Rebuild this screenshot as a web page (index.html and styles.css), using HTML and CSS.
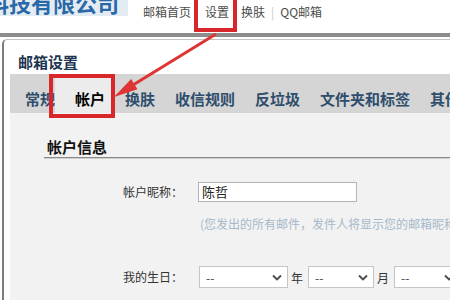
FILE: index.html
```html
<!DOCTYPE html>
<html lang="zh-CN">
<head>
<meta charset="utf-8">
<title>邮箱设置</title>
<link rel="stylesheet" href="styles.css">
</head>
<body>
<header class="top">
  <div class="logo"><span class="logo-text">科技有限公司</span></div>
  <nav class="nav">
    <a class="nav-link first">邮箱首页</a>
    <a class="nav-link second">设置</a>
    <a class="nav-link">换肤</a>
    <span class="sep">|</span>
    <a class="nav-link">QQ邮箱</a>
  </nav>
</header>
<div class="bar"></div>
<main class="panel">
  <div class="panel-title">邮箱设置</div>
  <div class="tabs">
    <span class="tab">常规</span>
    <span class="tab active">帐户</span>
    <span class="tab">换肤</span>
    <span class="tab">收信规则</span>
    <span class="tab">反垃圾</span>
    <span class="tab">文件夹和标签</span>
    <span class="tab">其他</span>
  </div>
  <div class="content">
    <div class="section-title">帐户信息</div>
    <div class="row">
      <span class="label">帐户昵称：</span>
      <div class="input">陈哲</div>
    </div>
    <div class="hint">(您发出的所有邮件，发件人将显示您的邮箱昵称</div>
    <div class="row birthday">
      <span class="label">我的生日：</span>
      <div class="select w1"><span class="val">--</span><svg class="chev" width="10" height="7" viewBox="0 0 10 7"><path d="M1 1.5 L5 5.5 L9 1.5" fill="none" stroke="#4a4a4a" stroke-width="1.8"/></svg></div>
      <span class="unit">年</span>
      <div class="select w2"><span class="val">--</span><svg class="chev" width="10" height="7" viewBox="0 0 10 7"><path d="M1 1.5 L5 5.5 L9 1.5" fill="none" stroke="#4a4a4a" stroke-width="1.8"/></svg></div>
      <span class="unit">月</span>
      <div class="select w2"><span class="val">--</span><svg class="chev" width="10" height="7" viewBox="0 0 10 7"><path d="M1 1.5 L5 5.5 L9 1.5" fill="none" stroke="#4a4a4a" stroke-width="1.8"/></svg></div>
    </div>
  </div>
</main>
<svg class="overlay" width="450" height="300" viewBox="0 0 450 300">
  <rect x="196" y="-2" width="39" height="32" fill="none" stroke="#d8262a" stroke-width="4"/>
  <rect x="51" y="76" width="62" height="40" fill="none" stroke="#d8262a" stroke-width="4"/>
  <line x1="216" y1="34" x2="133" y2="85" stroke="#df3434" stroke-width="3"/>
  <polygon points="114,97 137.5,89.3 131.1,79.1" fill="#df3434"/>
</svg>
</body>
</html>
```

FILE: styles.css
```css
* { box-sizing: border-box; }
html, body { margin: 0; padding: 0; }
body {
  width: 450px;
  height: 300px;
  overflow: hidden;
  position: relative;
  background: #fff;
  font-family: "Noto Sans CJK SC", "Noto Sans", sans-serif;
  color: #333;
}
.top {
  height: 33px;
  display: flex;
  align-items: flex-start;
}
.logo {
  width: 128px;
  height: 16px;
  background: #e4ecf3;
  overflow: hidden;
  flex-shrink: 0;
}
.logo-text {
  display: block;
  margin-top: -11px;
  margin-left: -13px;
  font-size: 22px;
  line-height: 26px;
  font-weight: bold;
  color: #2a69a8;
  white-space: nowrap;
}
.nav {
  display: flex;
  gap: 6px;
  margin-left: 15px;
  padding-top: 4px;
  font-size: 12px;
  line-height: 16px;
}
.nav-link { color: #4b4b4b; }
.nav-link.first { margin-right: 8px; }
.nav-link.second { margin-right: 6px; }
.sep { color: #c8c8c8; }
.bar {
  height: 4px;
  background: #8d8d8d;
}
.panel {
  margin: 2px 0 0 2px;
  border-top: 1px solid #c4c4c4;
  border-left: 2px solid #7c7c7c;
  border-top-left-radius: 5px;
  height: 300px;
}
.panel-title {
  padding: 12px 0 2px 14px;
  font-size: 15px;
  line-height: 20px;
  font-weight: bold;
  color: #1d3550;
}
.tabs {
  margin-left: 6px;
  height: 39px;
  background: #d5d5d5;
  display: flex;
  padding-left: 5px;
  white-space: nowrap;
  overflow: hidden;
}
.tab {
  padding: 15px 10px 4px;
  font-size: 15px;
  line-height: 20px;
  font-weight: bold;
  color: #2f4e6c;
  flex-shrink: 0;
}
.tab.active {
  margin-left: -10px;
  padding-left: 20px;
  background: #ececec;
  color: #000;
}
.content {
  margin-left: 6px;
  background: #f2f2f2;
  height: 200px;
  padding-top: 24px;
  overflow: hidden;
}
.section-title {
  margin-left: 34px;
  padding-left: 3px;
  font-size: 15px;
  line-height: 20px;
  font-weight: bold;
  color: #111;
  border-bottom: 1px solid #8a8a8a;
  box-shadow: 0 1px 0 #cfcfcf;
}
.row {
  display: flex;
  align-items: center;
  margin-top: 24px;
  font-size: 12px;
}
.label {
  width: 173px;
  flex-shrink: 0;
  margin-right: 15px;
  text-align: right;
  color: #333;
  line-height: 16px;
}
.input {
  width: 159px;
  height: 20px;
  flex-shrink: 0;
  background: #fff;
  border: 1px solid #b5b5b5;
  padding-left: 3px;
  font-size: 13px;
  line-height: 18px;
  color: #222;
}
.hint {
  margin: 14px 0 0 190px;
  font-size: 12px;
  line-height: 16px;
  color: #a6b9cb;
  white-space: nowrap;
}
.birthday { margin-top: 34px; }
.select {
  height: 22px;
  background: #fff;
  border: 1px solid #c5c5c5;
  display: flex;
  align-items: center;
  justify-content: space-between;
  padding: 0 5px 0 6px;
  flex-shrink: 0;
  margin-left: 1px;
}
.select.w1 { width: 89px; }
.select.w2 { width: 66px; }
.val { font-size: 12px; color: #444; }
.chev { display: block; }
.unit {
  margin: 0 4px 0 3px;
  font-size: 12px;
  color: #333;
  flex-shrink: 0;
}
.overlay {
  position: absolute;
  top: 0;
  left: 0;
  pointer-events: none;
}
```
